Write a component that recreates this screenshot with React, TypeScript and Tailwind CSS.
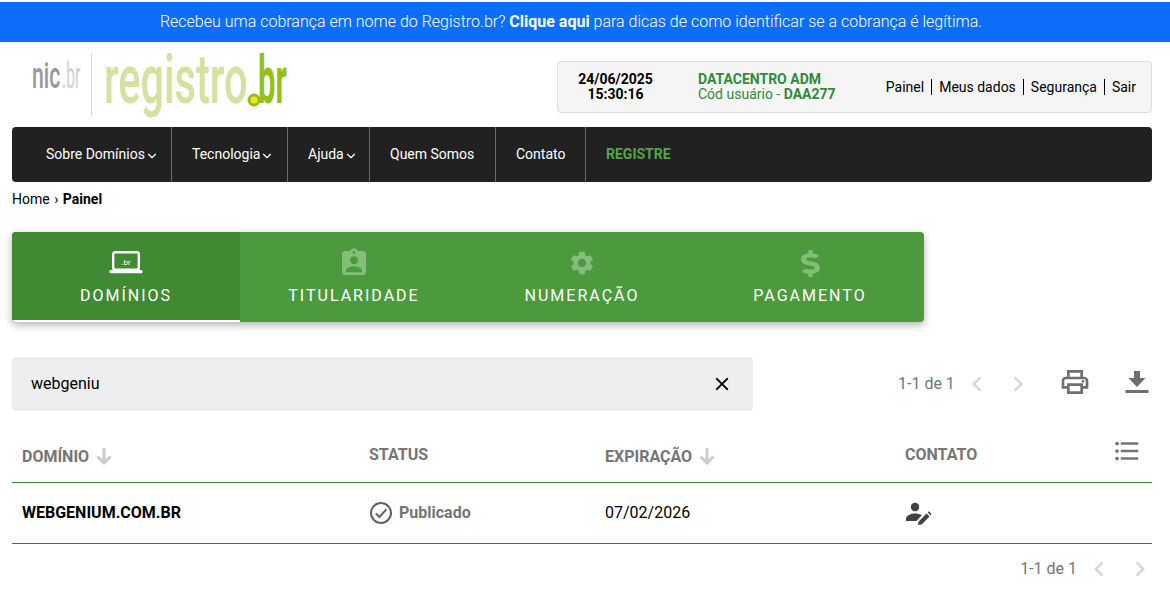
import { ChevronDown } from "lucide-react";
import {
  MdAssignmentInd,
  MdChevronLeft,
  MdChevronRight,
  MdClose,
  MdFormatListBulleted,
  MdOutlinePrint,
  MdSettings,
} from "react-icons/md";
import { FaDollarSign } from "react-icons/fa";

const font = { fontFamily: "Roboto, sans-serif" };

function Logo() {
  return (
    <svg width="270" height="110" viewBox="0 -20 270 110" className="block">
      <g fontFamily="Roboto, sans-serif">
        <text transform="translate(0 35) scale(0.76 1.35)" fontSize="28" fill="#9a9a9a" fontWeight="500">nic</text>
        <text transform="translate(30 35) scale(0.56 1.35)" fontSize="28" fill="#d0d0d0" fontWeight="400">.br</text>
        <rect x="59" y="0" width="1" height="63" fill="#d8d8d8" />
        <text transform="translate(72 50) scale(0.83 1.38)" fontSize="50" fill="#d3e29e" fontWeight="500">registro</text>
        <text transform="translate(217 50) scale(0.62 1.32)" fontSize="50" fill="#94bf1c" fontWeight="700">.br</text>
        <circle cx="222" cy="47" r="6.5" fill="#94bf1c" />
        <circle cx="222" cy="47" r="3.5" fill="#f0e81e" />
      </g>
    </svg>
  );
}

function LaptopIcon() {
  return (
    <svg width="34" height="24" viewBox="0 0 34 24" className="block">
      <rect x="4.2" y="1.2" width="25.6" height="17.6" rx="2" fill="none" stroke="#fff" strokeWidth="2.4" />
      <rect x="0.5" y="19" width="33" height="3.2" rx="1" fill="#fff" />
      <text x="17" y="13.5" textAnchor="middle" fontSize="8" letterSpacing="0" fill="#fff" fontFamily="Roboto, sans-serif">.br</text>
    </svg>
  );
}

function DownloadIcon() {
  return (
    <svg width="24" height="24" viewBox="0 0 24 24" className="block text-[#6f6f6f]" fill="currentColor">
      <path d="M9 1h6v7h5.5L12 17 3.5 8H9z" />
      <rect x="0.5" y="20" width="23" height="3" />
    </svg>
  );
}

function SortArrow() {
  return (
    <svg width="16" height="17" viewBox="0 0 16 17" className="ml-[7px] block text-[#cccccc]" fill="none" stroke="currentColor" strokeWidth="3">
      <path d="M8 0v14.5M1.5 8.5l6.5 6.5 6.5-6.5" />
    </svg>
  );
}

function CheckIcon() {
  return (
    <svg width="24" height="24" viewBox="0 0 24 24" className="mr-[6px] block text-[#616161]" fill="none" stroke="currentColor" strokeWidth="2">
      <circle cx="12" cy="12" r="10" />
      <path d="M6.8 12.4l3.6 3.6 7-7.6" />
    </svg>
  );
}

function ContactIcon() {
  return (
    <svg width="26" height="26" viewBox="0 0 26 26" className="block text-[#424242]" fill="currentColor">
      <circle cx="10" cy="7" r="4.2" />
      <path d="M1 21v-2.5c0-3 5-5 9-5 2.6 0 5 .5 7 1.6L11.5 21z" />
      <path d="M13 25l.6-3.6 8-8 3 3-8 8zM22.6 12.4l1.2-1.2 3 3-1.2 1.2z" />
    </svg>
  );
}

function Pager() {
  return (
    <div className="flex items-center text-[16px] text-[#757575]">
      <span>1-1 de 1</span>
      <MdChevronLeft className="ml-[7px] text-[#d6d6d6]" size={30} />
      <MdChevronRight className="ml-[11px] text-[#d6d6d6]" size={30} />
    </div>
  );
}

const navItems = [
  { label: "Sobre Domínios", menu: true, cls: "w-[160px] pl-[34px]" },
  { label: "Tecnologia", menu: true, cls: "w-[116px] pl-[20px]" },
  { label: "Ajuda", menu: true, cls: "w-[82px] pl-[20px]" },
  { label: "Quem Somos", menu: false, cls: "w-[126px] pl-[20px]" },
  { label: "Contato", menu: false, cls: "w-[90px] pl-[20px]" },
];

export default function App() {
  return (
    <div style={font} className="min-h-[604px] overflow-hidden bg-white text-black">
      {/* Aviso */}
      <div className="mt-[2px] flex h-[40px] items-center justify-center bg-[#0d6efd] pr-[28px] text-[16px] font-light text-white">
        <span>
          Recebeu uma cobrança em nome do Registro.br? <b className="font-bold">Clique aqui</b> para dicas de como identificar se a cobrança é legítima.
        </span>
      </div>

      {/* Header */}
      <div className="flex h-[85px] items-start justify-between px-[18px]">
        <div className="ml-[14px] -mt-[9px]">
          <Logo />
        </div>
        <div className="mt-[19px] flex h-[52px] w-[595px] items-center rounded-[4px] border border-[#dddddd] bg-[#f5f5f5] text-[14px]">
          <div className="w-[140px] pr-[25px] text-center font-bold leading-[15px]">
            <div>24/06/2025</div>
            <div>15:30:16</div>
          </div>
          <div className="leading-[15px] text-[#2e8b3e]">
            <div className="font-bold">DATACENTRO ADM</div>
            <div>
              Cód usuário - <b className="font-bold">DAA277</b>
            </div>
          </div>
          <div className="ml-auto mr-[15px] flex items-center leading-[16px]">
            <span className="border-r border-black pr-[7px]">Painel</span>
            <span className="border-r border-black px-[7px]">Meus dados</span>
            <span className="border-r border-black px-[7px]">Segurança</span>
            <span className="pl-[7px]">Sair</span>
          </div>
        </div>
      </div>

      <div className="pl-[12px] pr-[18px]">
        {/* Menu */}
        <nav className="flex h-[55px] items-center rounded-[4px] bg-[#212121] text-[14px] text-white">
          {navItems.map((item) => (
            <div key={item.label} className={`flex h-full items-center border-r border-[#6b6b6b] ${item.cls}`}>
              {item.label}
              {item.menu && <ChevronDown size={14} strokeWidth={2} className="mt-[2px]" />}
            </div>
          ))}
          <div className="pl-[20px] font-bold text-[#54a546]">REGISTRE</div>
        </nav>

        <div className="mt-[9px] text-[14px] leading-[16px]">
          Home <span className="mx-[1px]">›</span> <b className="font-bold">Painel</b>
        </div>

        {/* Abas */}
        <div className="mt-[25px] flex h-[90px] w-[912px] overflow-hidden rounded-[4px] bg-[#4c9a3d] text-[16px] tracking-[2px] text-white shadow-[0_3px_8px_rgba(0,0,0,0.3)]">
          <div className="flex w-[228px] flex-col items-center border-b-2 border-white bg-[#3f8a32] pt-[13px]">
            <div className="flex h-[36px] items-center"><LaptopIcon /></div>
            <span className="mt-[5px] leading-[20px]">DOMÍNIOS</span>
          </div>
          <div className="flex w-[228px] flex-col items-center pt-[13px]">
            <div className="flex h-[36px] items-center"><MdAssignmentInd size={32} className="text-[#85bd7b]" /></div>
            <span className="mt-[5px] leading-[20px]">TITULARIDADE</span>
          </div>
          <div className="flex w-[228px] flex-col items-center pt-[13px]">
            <div className="flex h-[36px] items-center"><MdSettings size={28} className="text-[#85bd7b]" /></div>
            <span className="mt-[5px] leading-[20px]">NUMERAÇÃO</span>
          </div>
          <div className="flex w-[228px] flex-col items-center pt-[13px]">
            <div className="flex h-[36px] items-center"><FaDollarSign preserveAspectRatio="none" className="h-[27px] w-[19px] text-[#85bd7b]" /></div>
            <span className="mt-[5px] leading-[20px]">PAGAMENTO</span>
          </div>
        </div>

        {/* Busca */}
        <div className="mt-[35px] flex h-[54px] items-center">
          <div className="flex h-full w-[741px] items-center justify-between rounded-[4px] bg-[#eeeeee] pl-[19px] pr-[20px] text-[16px]">
            <span>webgeniu</span>
            <MdClose size={22} />
          </div>
          <div className="ml-[145px] -mt-[1px]">
            <Pager />
          </div>
          <MdOutlinePrint size={32} className="ml-[26px] -mt-[5px] text-[#6f6f6f]" />
          <div className="ml-[34px] -mt-[5px]">
            <DownloadIcon />
          </div>
        </div>

        {/* Tabela */}
        <div className="mt-[22px] grid h-[50px] grid-cols-[347px_236px_300px_1fr] border-b border-[#2e8b3e] pl-[10px] text-[16px] font-bold text-[#757575]">
          <div className="flex items-center pb-[2px]">
            DOMÍNIO <SortArrow />
          </div>
          <div className="pt-[10px]">STATUS</div>
          <div className="flex items-center pb-[2px]">
            EXPIRAÇÃO <SortArrow />
          </div>
          <div className="flex items-start justify-between pt-[10px]">
            CONTATO
            <MdFormatListBulleted size={30} className="-mt-[7px] mr-[10px] text-[#757575]" />
          </div>
        </div>
        <div className="grid h-[61px] grid-cols-[347px_236px_300px_1fr] items-center border-b border-[#2e7d42] pl-[10px] text-[16px]">
          <div className="font-bold">WEBGENIUM.COM.BR</div>
          <div className="flex items-center font-bold text-[#757575]">
            <CheckIcon />
            Publicado
          </div>
          <div>07/02/2026</div>
          <div><ContactIcon /></div>
        </div>
        <div className="mt-[10px] -mr-[3px] flex justify-end">
          <Pager />
        </div>
      </div>
    </div>
  );
}
